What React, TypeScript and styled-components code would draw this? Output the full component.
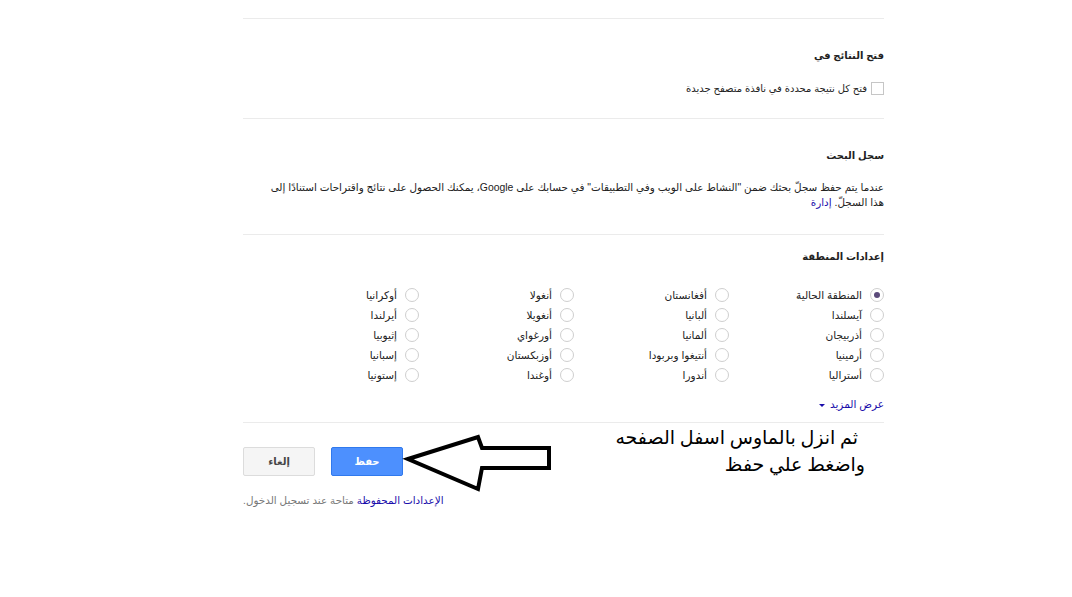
import React, { useState } from "react";
import styled, { createGlobalStyle } from "styled-components";

const GlobalStyle = createGlobalStyle`
  html, body {
    margin: 0;
    padding: 0;
    background: #fff;
  }
  body {
    font-family: "Liberation Sans", "DejaVu Sans", Arial, sans-serif;
    color: #222;
  }
`;

const Page = styled.div`
  position: relative;
  width: 1072px;
  height: 597px;
  overflow: hidden;
`;

const Column = styled.div`
  direction: rtl;
  width: 641px;
  margin-left: 243px;
  padding-top: 18px;
`;

const Section = styled.div<{ $top: number; $bottom: number }>`
  border-top: 1px solid #ebebeb;
  padding-top: ${(p) => p.$top}px;
  padding-bottom: ${(p) => p.$bottom}px;
`;

const Heading = styled.div`
  font-size: 10px;
  font-weight: bold;
  line-height: 16px;
  height: 16px;
`;

const CheckRow = styled.label`
  display: flex;
  align-items: center;
  gap: 4px;
  margin-top: 16px;
  height: 16px;
  font-size: 10px;
`;

const Box = styled.span`
  width: 11px;
  height: 11px;
  border: 1px solid #c6c6c6;
  background: #fff;
`;

const Paragraph = styled.p`
  margin: 16px 0 0;
  font-size: 10.4px;
  line-height: 15px;
  white-space: nowrap;
`;

const Link = styled.a`
  color: #1a0dab;
  text-decoration: none;
  cursor: pointer;
`;

const RegionGrid = styled.div`
  display: grid;
  grid-template-columns: repeat(4, 155px);
  grid-auto-rows: 20px;
  margin-top: 20px;
`;

const RadioItem = styled.label`
  display: flex;
  align-items: center;
  gap: 8px;
  font-size: 10.5px;
  cursor: pointer;
`;

const Circle = styled.span<{ $on: boolean }>`
  flex: none;
  width: 12px;
  height: 12px;
  border-radius: 50%;
  border: 1px solid #cfcfcf;
  background: #fff;
  display: flex;
  align-items: center;
  justify-content: center;
  &::after {
    content: "";
    width: 6px;
    height: 6px;
    border-radius: 50%;
    background: ${(p) => (p.$on ? "#5b4a7a" : "transparent")};
  }
`;

const MoreLink = styled(Link)`
  display: block;
  margin-top: 11px;
  font-size: 10.5px;
  line-height: 16px;
`;

const Caret = styled.span`
  display: inline-block;
  margin-right: 5px;
  width: 0;
  height: 0;
  border-left: 3px solid transparent;
  border-right: 3px solid transparent;
  border-top: 3px solid #1a0dab;
  vertical-align: middle;
`;

const ButtonRow = styled.div`
  display: flex;
  justify-content: flex-end;
  gap: 16px;
`;

const Button = styled.button<{ $primary?: boolean }>`
  width: 72px;
  height: 29px;
  border-radius: 2px;
  font-family: inherit;
  font-size: 10px;
  font-weight: bold;
  cursor: pointer;
  border: 1px solid ${(p) => (p.$primary ? "#3079ed" : "#dcdcdc")};
  background: ${(p) => (p.$primary ? "#4d90fe" : "#f5f5f5")};
  color: ${(p) => (p.$primary ? "#fff" : "#444")};
`;

const Footer = styled.div`
  margin-top: 17px;
  font-size: 10.4px;
  line-height: 16px;
  color: #777;
  text-align: left;
`;

const Note = styled.div`
  position: absolute;
  top: 424px;
  left: 600px;
  width: 265px;
  direction: rtl;
  text-align: right;
  font-family: "Liberation Serif", "DejaVu Sans", serif;
  font-size: 19px;
  line-height: 27px;
  color: #000;
`;

const NoteLine = styled.div<{ $indent?: number }>`
  padding-right: ${(p) => p.$indent ?? 0}px;
`;

const ArrowSvg = styled.svg`
  position: absolute;
  top: 432px;
  left: 400px;
`;

const regions = [
  ["المنطقة الحالية", "أفغانستان", "أنغولا", "أوكرانيا"],
  ["آيسلندا", "ألبانيا", "أنغويلا", "أيرلندا"],
  ["أذربيجان", "ألمانيا", "أورغواي", "إثيوبيا"],
  ["أرمينيا", "أنتيغوا وبربودا", "أوزبكستان", "إسبانيا"],
  ["أستراليا", "أندورا", "أوغندا", "إستونيا"],
];

const App: React.FC = () => {
  const [selected, setSelected] = useState("المنطقة الحالية");
  const [newWindow, setNewWindow] = useState(false);

  return (
    <Page>
      <GlobalStyle />
      <Column>
        <Section $top={29} $bottom={22}>
          <Heading>فتح النتائج في</Heading>
          <CheckRow onClick={() => setNewWindow(!newWindow)}>
            <Box />
            فتح كل نتيجة محددة في نافذة متصفح جديدة
          </CheckRow>
        </Section>

        <Section $top={29} $bottom={24}>
          <Heading>سجل البحث</Heading>
          <Paragraph>
            عندما يتم حفظ سجلّ بحثك ضمن "النشاط على الويب وفي التطبيقات" في حسابك على Google، يمكنك الحصول على نتائج
            واقتراحات استنادًا إلى
            <br />
            هذا السجلّ. <Link>إدارة</Link>
          </Paragraph>
        </Section>

        <Section $top={14} $bottom={10}>
          <Heading>إعدادات المنطقة</Heading>
          <RegionGrid>
            {regions.flat().map((name) => (
              <RadioItem key={name} onClick={() => setSelected(name)}>
                <Circle $on={selected === name} />
                {name}
              </RadioItem>
            ))}
          </RegionGrid>
          <MoreLink>
            عرض المزيد
            <Caret />
          </MoreLink>
        </Section>

        <Section $top={24} $bottom={0}>
          <ButtonRow>
            <Button $primary>حفظ</Button>
            <Button>إلغاء</Button>
          </ButtonRow>
          <Footer>
            <Link>الإعدادات المحفوظة</Link> متاحة عند تسجيل الدخول.
          </Footer>
        </Section>
      </Column>

      <Note>
        <NoteLine $indent={7}>ثم انزل بالماوس اسفل الصفحه</NoteLine>
        <NoteLine>واضغط علي حفظ</NoteLine>
      </Note>
      <ArrowSvg width="160" height="64" viewBox="0 0 160 64">
        <polygon
          points="8,27 78,5 82,16 149,16 149,36 82,36 78,57"
          fill="#fff"
          stroke="#000"
          strokeWidth="4"
          strokeLinejoin="miter"
        />
      </ArrowSvg>
    </Page>
  );
};

export default App;
